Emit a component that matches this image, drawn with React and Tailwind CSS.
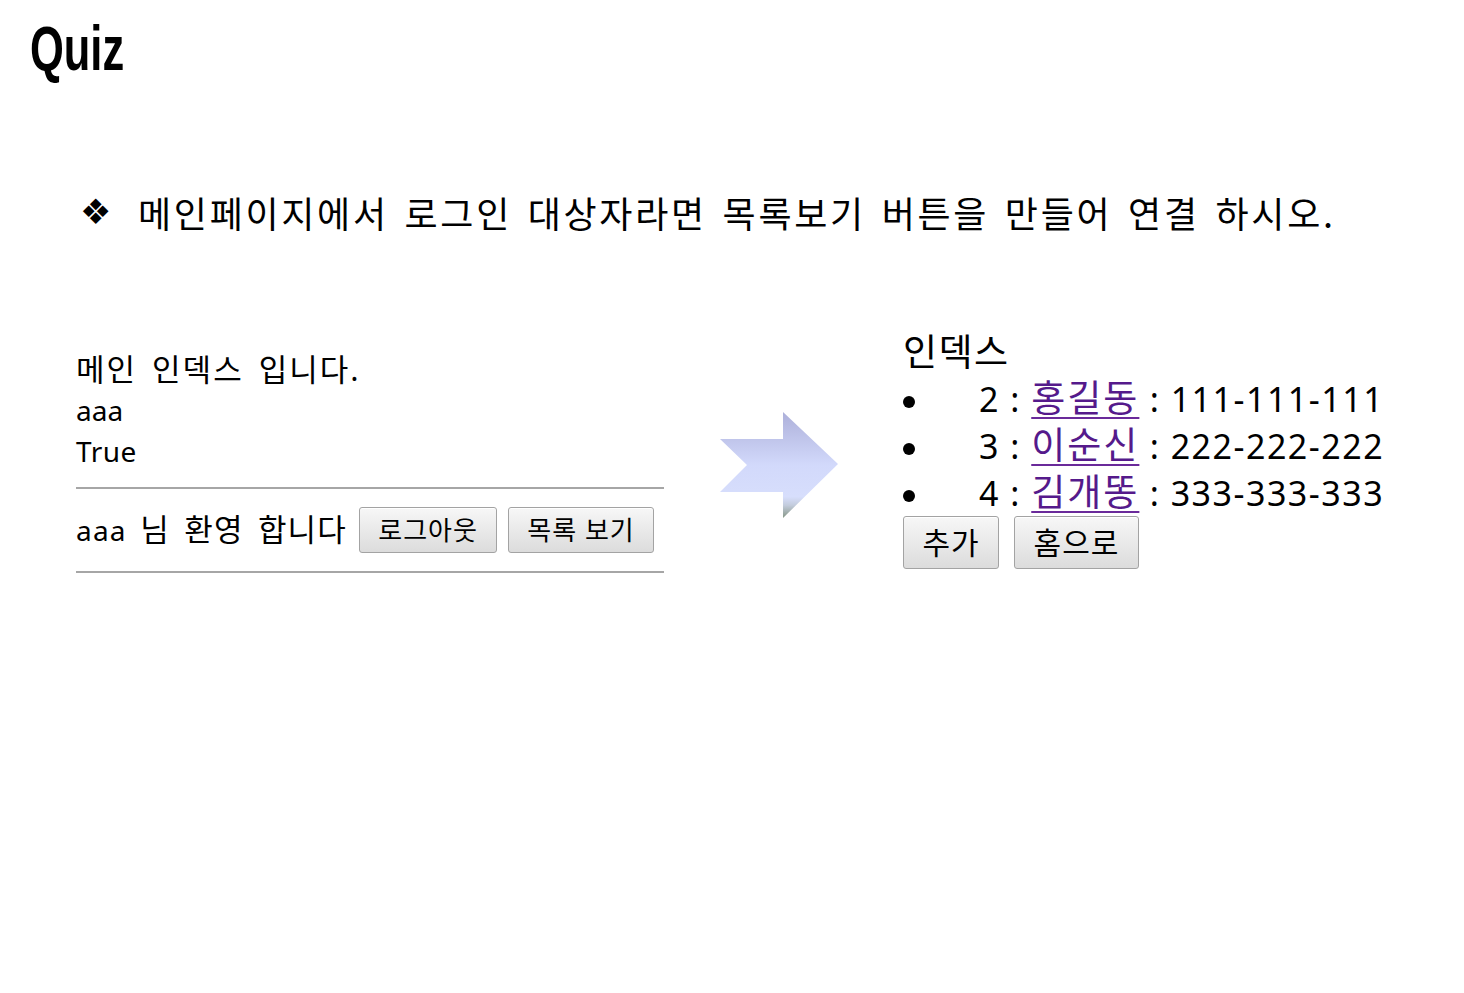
export default function App() {
  const btn =
    "flex items-center justify-center rounded-[3px] border border-[#a3a3a3] bg-gradient-to-b from-[#f7f7f7] to-[#dcdcdc] shadow-[inset_0_1px_0_#ffffff] text-black";
  const rows = [
    { n: "2", name: "홍길동", tel: "111-111-111" },
    { n: "3", name: "이순신", tel: "222-222-222" },
    { n: "4", name: "김개똥", tel: "333-333-333" },
  ];
  return (
    <div className="w-[1464px] h-[993px] bg-white overflow-hidden text-black">
      <div className="pl-[30px] pt-[17px] h-[80px]">
        <span className="inline-block origin-left scale-x-[0.69] font-['Liberation_Sans',sans-serif] font-bold text-[63px] leading-[63px]">
          Quiz
        </span>
      </div>

      <div className="mt-[108px] flex items-center h-[48px] pl-[80px]">
        <span className="w-[58px] font-['DejaVu_Sans',sans-serif] text-[35px] leading-[48px]">
          ❖
        </span>
        <span className="font-['Noto_Sans_CJK_KR',sans-serif] text-[36px] leading-[48px] tracking-[2.7px] [word-spacing:5px] whitespace-nowrap">
          메인페이지에서 로그인 대상자라면 목록보기 버튼을 만들어 연결 하시오.
        </span>
      </div>

      <div className="mt-[92px] flex items-start font-['Noto_Sans','Noto_Sans_CJK_KR',sans-serif]">
        {/* left panel */}
        <div className="ml-[76px] w-[588px] mt-[21px] text-[28px] leading-[41px]">
          <div className="text-[31px] tracking-[2px] [word-spacing:5px] whitespace-nowrap">메인 인덱스 입니다.</div>
          <div>aaa</div>
          <div className="tracking-[0.5px]">True</div>
          <div className="mt-[15px] border-t-2 border-[#a6a6a6]" />
          <div className="flex items-center py-[18px]">
            <span className="whitespace-nowrap tracking-[1.2px] [word-spacing:5px]">
              aaa <span className="text-[31px]">님 환영 합니다</span>
            </span>
            <button className={`${btn} ml-[12px] w-[138px] h-[46px] text-[26px] tracking-[1px]`}>
              로그아웃
            </button>
            <button className={`${btn} ml-[11px] w-[146px] h-[46px] text-[26px] tracking-[1px]`}>
              목록 보기
            </button>
          </div>
          <div className="border-t-2 border-[#a6a6a6]" />
        </div>

        {/* arrow */}
        <div className="ml-[56px] mt-[84px] w-[118px] h-[106px] shrink-0">
          <svg width="118" height="106" viewBox="0 0 118 106">
            <defs>
              <linearGradient id="ag" x1="0" y1="0" x2="0" y2="1">
                <stop offset="0" stopColor="#adb0da" />
                <stop offset="0.5" stopColor="#d2d9fb" />
                <stop offset="0.8" stopColor="#d7defc" />
                <stop offset="0.88" stopColor="#c3ccdc" />
                <stop offset="1" stopColor="#869686" />
              </linearGradient>
            </defs>
            <polygon
              points="0,27 63,27 63,0 118,52 63,106 63,80 0,80 27,53"
              fill="url(#ag)"
            />
          </svg>
        </div>

        {/* right panel */}
        <div className="ml-[65px] text-[34px] leading-[47px] tracking-[1.5px]">
          <div className="text-[37px] tracking-[1.5px]">인덱스</div>
          {rows.map((r) => (
            <div key={r.n} className="flex items-center h-[47px] whitespace-nowrap">
              <span className="w-[76px] shrink-0 flex items-center">
                <span className="mt-[6px] w-[12px] h-[12px] rounded-full bg-black" />
              </span>
              <span>
                {r.n} :{" "}
                <a className="text-[37px] tracking-[2px] text-[#551a8b] underline decoration-2 underline-offset-[5px] decoration-[#6a2a9a]" href="#">
                  {r.name}
                </a>{" "}
                : {r.tel}
              </span>
            </div>
          ))}
          <div className="flex items-start gap-[15px]">
            <button className={`${btn} w-[96px] h-[53px] text-[30px] tracking-[1px]`}>추가</button>
            <button className={`${btn} w-[125px] h-[53px] text-[30px] tracking-[1px]`}>홈으로</button>
          </div>
        </div>
      </div>
    </div>
  );
}
